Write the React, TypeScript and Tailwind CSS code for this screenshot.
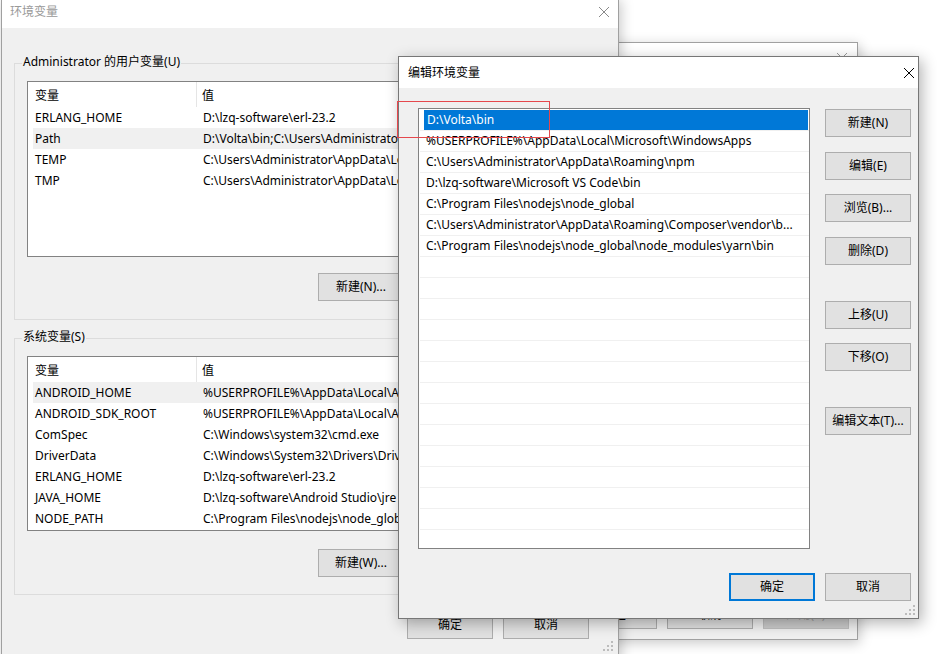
import React from "react";

const FONT = { fontFamily: '"Noto Sans", "Noto Sans CJK SC", sans-serif' };

const userVars: [string, string][] = [
  ["ERLANG_HOME", "D:\\lzq-software\\erl-23.2"],
  ["Path", "D:\\Volta\\bin;C:\\Users\\Administrator\\AppData\\Local\\Microsoft\\WindowsApps;"],
  ["TEMP", "C:\\Users\\Administrator\\AppData\\Local\\Temp"],
  ["TMP", "C:\\Users\\Administrator\\AppData\\Local\\Temp"],
];

const sysVars: [string, string][] = [
  ["ANDROID_HOME", "%USERPROFILE%\\AppData\\Local\\Android\\Sdk"],
  ["ANDROID_SDK_ROOT", "%USERPROFILE%\\AppData\\Local\\Android\\Sdk"],
  ["ComSpec", "C:\\Windows\\system32\\cmd.exe"],
  ["DriverData", "C:\\Windows\\System32\\Drivers\\DriverData"],
  ["ERLANG_HOME", "D:\\lzq-software\\erl-23.2"],
  ["JAVA_HOME", "D:\\lzq-software\\Android Studio\\jre"],
  ["NODE_PATH", "C:\\Program Files\\nodejs\\node_global\\node_modules"],
];

const paths = [
  "D:\\Volta\\bin",
  "%USERPROFILE%\\AppData\\Local\\Microsoft\\WindowsApps",
  "C:\\Users\\Administrator\\AppData\\Roaming\\npm",
  "D:\\lzq-software\\Microsoft VS Code\\bin",
  "C:\\Program Files\\nodejs\\node_global",
  "C:\\Users\\Administrator\\AppData\\Roaming\\Composer\\vendor\\b...",
  "C:\\Program Files\\nodejs\\node_global\\node_modules\\yarn\\bin",
];

function CloseX({ color = "#000" }: { color?: string }) {
  return (
    <svg width="12" height="12" viewBox="0 0 12 12" className="shrink-0">
      <path d="M1 1 L11 11 M11 1 L1 11" stroke={color} strokeWidth="1" />
    </svg>
  );
}

function Grip() {
  const dots = [
    [8, 0],
    [4, 4],
    [8, 4],
    [0, 8],
    [4, 8],
    [8, 8],
  ];
  return (
    <svg width="10" height="10" viewBox="0 0 10 10" className="absolute right-[3px] bottom-[3px]">
      {dots.map(([x, y], i) => (
        <rect key={i} x={x} y={y} width="2" height="2" fill="#bcbcbc" />
      ))}
    </svg>
  );
}

function Btn({
  children,
  focused,
  disabled,
  className = "",
}: {
  children: React.ReactNode;
  focused?: boolean;
  disabled?: boolean;
  className?: string;
}) {
  return (
    <div
      className={`flex items-center justify-center shrink-0 w-[86px] h-[28px] text-[12px] leading-none ${
        focused
          ? "border-2 border-[#0078d7] bg-[#e1e1e1] text-black"
          : disabled
          ? "border border-[#bfbfbf] bg-[#cccccc] text-[#a0a0a0]"
          : "border border-[#adadad] bg-[#e1e1e1] text-black"
      } ${className}`}
    >
      {children}
    </div>
  );
}

function VarList({ rows, hot, height }: { rows: [string, string][]; hot: number; height: string }) {
  return (
    <div className={`ml-[12px] w-[580px] ${height} border border-[#828282] bg-white overflow-hidden`}>
      <div className="flex h-[25px] text-[12px]">
        <div className="w-[169px] flex items-center pl-[7px] pt-[3px] border-r border-[#e5e5e5]">变量</div>
        <div className="flex items-center pl-[5px] pt-[3px]">值</div>
      </div>
      {rows.map(([k, v], i) => (
        <div
          key={k + i}
          className={`ml-[5px] flex h-[21px] items-center text-[12px] whitespace-nowrap ${
            i === hot ? "bg-[#f0f0f0]" : ""
          }`}
        >
          <div className="w-[164px] pl-[2px] shrink-0">{k}</div>
          <div className="pl-[6px]">{v}</div>
        </div>
      ))}
    </div>
  );
}

function GroupBox({
  label,
  children,
}: {
  label: string;
  children: React.ReactNode;
}) {
  return (
    <div className="w-[592px] border border-[#dcdcdc]">
      <div className="-mt-[10px] ml-[7px] w-fit px-[1px] bg-[#f0f0f0] text-[12px] leading-[16px]">{label}</div>
      {children}
    </div>
  );
}

function EnvWindow() {
  return (
    <div className="absolute left-[1px] top-0 w-[618px] h-[670px] border-x border-[#a0a0a0] bg-[#f0f0f0] shadow-[2px_0_12px_rgba(0,0,0,0.22)]">
      <div className="h-[28px] bg-white flex justify-between pl-[8px] pr-[8px] pt-[4px]">
        <span className="text-[12px] leading-[16px] text-[#999999]">环境变量</span>
        <div className="pt-[2px]">
          <CloseX color="#8a8a8a" />
        </div>
      </div>
      <div className="pl-[12px] pt-[35px]">
        <GroupBox label="Administrator 的用户变量(U)">
          <div className="mt-[11px]">
            <VarList rows={userVars} hot={1} height="h-[176px]" />
          </div>
          <div className="mt-[16px] ml-[303px] flex gap-[10px] pb-[18px]">
            <Btn className="w-[85px] h-[27px]">新建(N)...</Btn>
            <Btn className="w-[85px] h-[27px]">编辑(I)...</Btn>
            <Btn className="w-[85px] h-[27px]">删除(D)</Btn>
          </div>
        </GroupBox>
        <div className="mt-[18px]">
          <GroupBox label="系统变量(S)">
            <div className="mt-[11px]">
              <VarList rows={sysVars} hot={0} height="h-[175px]" />
            </div>
            <div className="mt-[18px] ml-[303px] flex gap-[10px] pb-[17px]">
              <Btn className="w-[85px] h-[27px]">新建(W)...</Btn>
              <Btn className="w-[85px] h-[27px]">编辑(I)...</Btn>
              <Btn className="w-[85px] h-[27px]">删除(L)</Btn>
            </div>
          </GroupBox>
        </div>
        <div className="mt-[16px] flex gap-[10px] ml-[393px]">
          <Btn className="w-[86px] h-[27px]">确定</Btn>
          <Btn className="w-[86px] h-[27px]">取消</Btn>
        </div>
      </div>
      <div className="absolute right-[2px] top-[644px] w-[10px] h-[10px]">
        <Grip />
      </div>
    </div>
  );
}

function SystemPropsWindow() {
  return (
    <div className="absolute left-[300px] top-[42px] w-[558px] h-[598px] border border-[#a0a0a0] bg-[#f0f0f0] shadow-[2px_3px_12px_rgba(0,0,0,0.22)] flex flex-col">
      <div className="h-[30px] bg-white flex items-center justify-end pr-[9px]">
        <CloseX color="#9a9a9a" />
      </div>
      <div className="flex-1" />
      <div className="flex justify-end gap-[10px] pr-[8px] pb-[10px]">
        <Btn>确定</Btn>
        <Btn>取消</Btn>
        <Btn disabled>应用(A)</Btn>
      </div>
    </div>
  );
}

function EditDialog() {
  const rowCount = 21;
  return (
    <div className="absolute left-[398px] top-[56px] w-[521px] h-[563px] border border-[#777777] bg-[#f0f0f0] shadow-[3px_4px_14px_rgba(0,0,0,0.3)]">
      <div className="h-[31px] bg-white flex items-center justify-between pl-[9px] pr-[3px]">
        <span className="text-[12px] text-black">编辑环境变量</span>
        <CloseX />
      </div>
      <div className="flex pl-[19px] pt-[20px]">
        <div className="w-[392px] h-[441px] border border-[#828282] bg-white overflow-hidden pt-[1px]">
          {Array.from({ length: rowCount }).map((_, i) => (
            <div key={i} className="h-[21px] ml-[1px] border-b border-[#f0f0f0]">
              <div
                className={`ml-[4px] mr-[1px] h-[20px] flex items-center text-[12px] whitespace-nowrap overflow-hidden ${
                  i === 0 ? "bg-[#0078d7] text-white pl-[3px]" : "text-black pl-[2px]"
                }`}
              >
                {paths[i] ?? ""}
              </div>
            </div>
          ))}
        </div>
        <div className="ml-[15px] flex flex-col pt-[1px]">
          <Btn>新建(N)</Btn>
          <Btn className="mt-[15px]">编辑(E)</Btn>
          <Btn className="mt-[14px]">浏览(B)...</Btn>
          <Btn className="mt-[15px]">删除(D)</Btn>
          <Btn className="mt-[36px]">上移(U)</Btn>
          <Btn className="mt-[14px]">下移(O)</Btn>
          <Btn className="mt-[36px]">编辑文本(T)...</Btn>
        </div>
      </div>
      <div className="flex justify-end gap-[10px] pr-[7px] mt-[24px]">
        <Btn focused>确定</Btn>
        <Btn>取消</Btn>
      </div>
      <Grip />
    </div>
  );
}

export default function App() {
  return (
    <div className="relative w-[937px] h-[654px] bg-white overflow-hidden text-black" style={FONT}>
      <SystemPropsWindow />
      <EnvWindow />
      <EditDialog />
      <div className="absolute left-[397px] top-[101px] w-[153px] h-[37px] border border-[#e5484d]" />
    </div>
  );
}
